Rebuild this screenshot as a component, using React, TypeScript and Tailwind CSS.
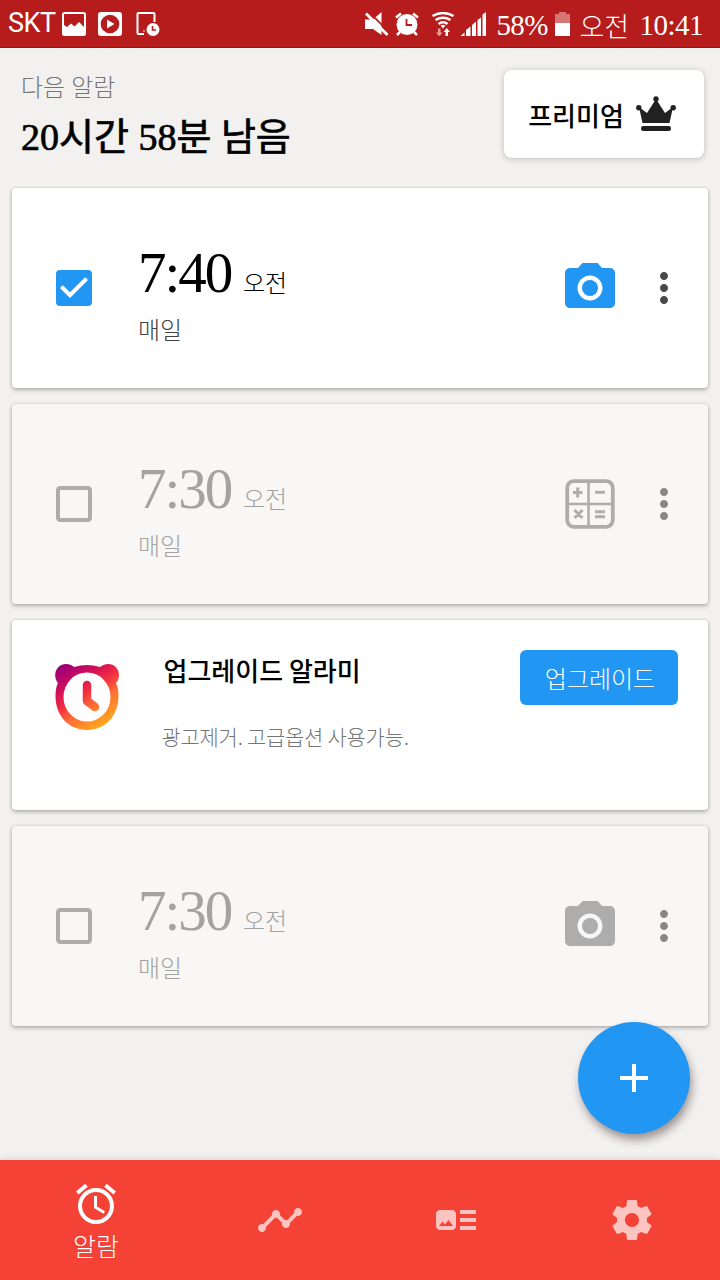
import { MdAdd, MdAlarm, MdArtTrack, MdCameraAlt, MdCheckBox, MdCheckBoxOutlineBlank, MdMoreVert, MdTimeline } from 'react-icons/md'

type AlarmProps = {
    time: string,
    active?: boolean,
    mission: 'camera' | 'math'
}

function StatusBar() {
    return (
        <header className="flex h-12 items-center justify-between border-b border-[#a50a10] bg-[#b71c1c] pl-2 pr-[17px] text-white">
            <div className="flex items-center">
                <span className="w-[54px] font-[Roboto,sans-serif] text-[27px] leading-none tracking-[-0.5px]">SKT</span>
                <svg className="h-6 w-6" viewBox="0 0 24 24">
                    <rect x="1" y="1" width="22" height="22" rx="1.500" fill="none" stroke="currentColor" strokeWidth="2" />
                    <path d="M2 13l3 2 4-3.500 3.500 3 4.500-4.500 5 5v7H2z" fill="currentColor" />
                </svg>
                <svg className="ml-3 h-6 w-6" viewBox="0 0 24 24">
                    <rect width="24" height="24" rx="3" fill="currentColor" />
                    <circle cx="12" cy="12" r="9.300" fill="#b71c1c" />
                    <path d="M9 7.500v9l7.500-4.500z" fill="currentColor" />
                </svg>
                <svg className="ml-3.5 h-6 w-6" viewBox="0 0 24 24">
                    <path d="M8 22H2.500a1 1 0 0 1-1-1V2a1 1 0 0 1 1-1h15a1 1 0 0 1 1 1v8" fill="none" stroke="currentColor" strokeWidth="2" />
                    <circle cx="8" cy="19" r="0.800" fill="currentColor" />
                    <circle cx="17" cy="17.500" r="6.500" fill="currentColor" />
                    <path d="M16.500 14v4h3.500" fill="none" stroke="#b71c1c" strokeWidth="1.600" />
                </svg>
            </div>
            <div className="flex items-center">
                <svg className="h-6 w-6" viewBox="0 0 24 24">
                    <path d="M0 7.500h8L16.500 0v23L8 17H0z" fill="currentColor" />
                    <path d="M3-1l22 22" stroke="#b71c1c" strokeWidth="1.800" />
                    <path d="M1 1.500l21.500 21.500" stroke="currentColor" strokeWidth="2.800" />
                </svg>
                <svg className="ml-1.5 h-6 w-6" viewBox="0 0 24 24">
                    <circle cx="12" cy="12.500" r="10.500" fill="currentColor" />
                    <path d="M1 5.500l5-4M23 5.500l-5-4M5 20l-3 3M19 20l3 3" stroke="currentColor" strokeWidth="2.500" />
                    <path d="M11.500 7v6H17" fill="none" stroke="#b71c1c" strokeWidth="1.800" />
                </svg>
                <svg className="ml-3 h-6 w-6" viewBox="0 0 24 24">
                    <path d="M1.500 4q10.500-6 21 0M4.500 8q7.500-4.500 15 0M7.500 12q4.500-3.500 9 0" fill="none" stroke="currentColor" strokeWidth="2.400" />
                    <path d="M9.500 13.500q2.500-1.500 5 0L12 16.500z" fill="currentColor" />
                    <path d="M7 16.500h2.500v4h2L8.200 24.500 5 20.500h2z" fill="#e59b9b" />
                    <path d="M14.500 24H17v-4h2l-3.200-4-3.300 4h2z" fill="currentColor" />
                </svg>
                <svg className="ml-1 h-[26px] w-7" viewBox="0 0 28 26">
                    <path d="M1.500 25l4-3.500V25zM7 25v-6l4.500-3.500V25zM13 25V14l4-3.500V25zM18.500 25V9L22 6.500V25zM23.500 25V3.500L27 1v24z" fill="currentColor" />
                </svg>
                <span className="ml-[9px] mt-1 w-[53px] font-['Liberation_Serif',serif] text-[29px] leading-none tracking-[-0.6px]">58%</span>
                <svg className="ml-[5px] h-[26px] w-[17px]" viewBox="0 0 17 26">
                    <path d="M1 3h4V1h7v2h4v10H1z" fill="#d77575" />
                    <path d="M1 12h15v13H1z" fill="currentColor" />
                </svg>
                <span className="ml-2 mt-1 w-[60px] font-['Noto_Sans_CJK_KR',sans-serif] text-[27px] font-light leading-none">오전</span>
                <span className="mt-1 font-['Liberation_Serif',serif] text-[29px] leading-none tracking-[-0.5px]">10:41</span>
            </div>
        </header>
    )
}

function Crown() {
    return (
        <svg className="h-9 w-10" viewBox="0 0 40 36" fill="#212121">
            <path d="M3 11l8 6 9-14 9 14 8-6-3.500 16h-27z" />
            <circle cx="20" cy="3" r="2.700" />
            <circle cx="2.800" cy="11.800" r="2.700" />
            <circle cx="37.200" cy="11.800" r="2.700" />
            <rect x="5" y="30" width="30" height="5" rx="2.200" />
        </svg>
    )
}

function MathIcon() {
    return (
        <svg className="h-[50px] w-[50px]" viewBox="0 0 50 50" fill="none" stroke="#adadad">
            <rect x="2.200" y="2.200" width="45.600" height="45.600" rx="6.500" strokeWidth="3.800" />
            <path d="M23.500 3v44M3 25h44" strokeWidth="2.600" />
            <path d="M8 13.500h9.500M12.700 8.500v10M30 13.300h10M30 32.700h10M30 37.700h10M9.500 31l8 8M17.500 31l-8 8" strokeWidth="3" />
        </svg>
    )
}

function AlarmCard({time, active, mission}: AlarmProps) {
    return (
        <section className={`flex h-[200px] items-center rounded pl-[38px] pr-5 shadow-[0_2px_4px_rgba(0,0,0,0.25),0_0_3px_rgba(0,0,0,0.15)] ${active ? 'bg-white' : 'bg-[#f8f7f5]'}`}>
            {active ? <MdCheckBox className="size-12 text-[#2196f3]" /> : <MdCheckBoxOutlineBlank className="size-12 text-[#adadad]" />}
            <div className={`ml-10 flex-1 pt-3 ${active ? 'text-black' : 'text-[#a3a3a2]'}`}>
                <div className="flex items-baseline">
                    <span className="w-[105px] font-['Liberation_Serif',serif] text-[57px] leading-[60px] tracking-[-2px]">{time}</span>
                    <span className="font-['Noto_Sans_CJK_KR',sans-serif] text-[24px] font-light leading-8">오전</span>
                </div>
                <p className={`mt-2.5 font-['Noto_Sans_CJK_KR',sans-serif] text-[24px] font-light leading-8 ${active ? 'text-[#424242]' : ''}`}>매일</p>
            </div>
            <div className="mr-5 flex h-[60px] w-[60px] items-center justify-center">
                {mission === 'camera' ? <MdCameraAlt className={`size-[60px] ${active ? 'text-[#2196f3]' : 'text-[#adadad]'}`} /> : <MathIcon />}
            </div>
            <MdMoreVert className={`size-12 ${active ? 'text-[#484848]' : 'text-[#888887]'}`} />
        </section>
    )
}

function Logo() {
    return (
        <svg className="h-[68px] w-16" viewBox="0 0 64 68">
            <defs>
                <linearGradient id="bear" gradientUnits="userSpaceOnUse" x1="8" y1="4" x2="48" y2="64">
                    <stop offset="0" stopColor="#9c0078" />
                    <stop offset="0.270" stopColor="#d50f58" />
                    <stop offset="0.480" stopColor="#f23240" />
                    <stop offset="0.680" stopColor="#ff6f35" />
                    <stop offset="1" stopColor="#ffab1c" />
                </linearGradient>
            </defs>
            <path d="M11 1c3 0 6 1 8 3q13-4 26 0c9-7 19-1 19 8 0 3-1 6-3 8 2 4 2.500 8 2.500 13C63.500 53 50 67 32 67S.5 53 .5 33C.5 28 1 24 3 20-3 13 1 1 11 1z" fill="url(#bear)" />
            <ellipse cx="32" cy="34" rx="23.500" ry="24.500" fill="#fff" />
            <path d="M32 22v16l8 6" fill="none" stroke="url(#bear)" strokeWidth="8.500" strokeLinecap="round" strokeLinejoin="round" />
        </svg>
    )
}

function UpgradeCard() {
    return (
        <section className="flex h-[190px] items-start rounded bg-white pl-[42.5px] pr-[30px] pt-[30px] font-['Noto_Sans_CJK_KR',sans-serif] shadow-[0_2px_4px_rgba(0,0,0,0.25),0_0_3px_rgba(0,0,0,0.15)]">
            <div className="mt-[13px]"><Logo /></div>
            <div className="ml-[43px] flex-1">
                <h2 className="pl-0.5 text-[26px] font-medium leading-10 text-black">업그레이드 알라미</h2>
                <p className="mt-[30px] text-[21px] font-light leading-8 tracking-[-0.28px] text-[#757575]">광고제거. 고급옵션 사용가능.</p>
            </div>
            <button className="h-[55px] w-[158px] rounded-md bg-[#2196f3] pl-0.5 text-[24px] font-light text-white">업그레이드</button>
        </section>
    )
}

function BottomNav() {
    return (
        <nav className="grid h-[120px] grid-cols-4 bg-[#f44336] text-[#fbc4c0] shadow-[0_-1px_6px_rgba(0,0,0,0.12)]">
            <a className="ml-3 flex flex-col items-center pt-5 text-white">
                <MdAlarm className="size-12" />
                <span className="font-['Noto_Sans_CJK_KR',sans-serif] text-[25px] font-light leading-[34px]">알람</span>
            </a>
            <a className="flex items-center justify-center pl-5"><MdTimeline className="size-12" /></a>
            <a className="flex items-center justify-center pl-3"><MdArtTrack className="size-12" /></a>
            <a className="flex items-center justify-center pl-1">
                <svg className="size-12" viewBox="0 0 24 24" fill="currentColor">
                    <path d="M19.430 12.980c.04-.32.07-.64.07-.98s-.03-.66-.07-.98l2.110-1.650c.19-.15.24-.42.12-.64l-2-3.460c-.12-.22-.39-.3-.61-.22l-2.490 1c-.52-.4-1.080-.73-1.690-.98l-.38-2.650C14.460 2.180 14.250 2 14 2h-4c-.25 0-.46.18-.49.42l-.38 2.650c-.61.25-1.170.59-1.690.98l-2.490-1c-.23-.09-.49 0-.61.22l-2 3.460c-.13.22-.07.49.12.64l2.110 1.650c-.04.32-.07.65-.07.98s.03.66.07.98l-2.110 1.650c-.19.15-.24.42-.12.64l2 3.460c.12.22.39.3.61.22l2.490-1c.52.4 1.080.73 1.690.98l.38 2.650c.03.24.24.42.49.42h4c.25 0 .46-.18.49-.42l.38-2.650c.61-.25 1.170-.59 1.690-.98l2.490 1c.23.09.49 0 .61-.22l2-3.460c.12-.22.07-.49-.12-.64l-2.110-1.650zM12 15.500c-1.930 0-3.500-1.570-3.500-3.500s1.570-3.500 3.500-3.500 3.500 1.570 3.500 3.500-1.570 3.500-3.500 3.500z" />
                </svg>
            </a>
        </nav>
    )
}

export default function App() {
    return (
        <div className="relative flex h-[1280px] w-[720px] flex-col overflow-hidden bg-[#f2f1ef]">
            <StatusBar />
            <div className="flex h-[140px] items-start justify-between pl-[21px] pr-4 pt-[22px]">
                <div className="font-['Liberation_Serif','Noto_Sans_CJK_KR',serif]">
                    <p className="text-[24px] font-light leading-9 text-[#757575]">다음 알람</p>
                    <h1 className="mt-[5px] text-[38px] leading-[52px] text-black [-webkit-text-stroke:0.7px_black]">20시간 58분 남음</h1>
                </div>
                <button className="flex h-[88px] w-[200px] items-center justify-center gap-3 rounded-lg bg-white pr-1 font-['Noto_Sans_CJK_KR',sans-serif] text-[26px] font-medium text-black shadow-[0_1px_6px_rgba(0,0,0,0.22)]">
                    프리미엄
                    <Crown />
                </button>
            </div>
            <main className="flex flex-1 flex-col gap-4 px-3">
                <AlarmCard time="7:40" active mission="camera" />
                <AlarmCard time="7:30" mission="math" />
                <UpgradeCard />
                <AlarmCard time="7:30" mission="camera" />
            </main>
            <button className="absolute bottom-[146px] right-[30px] flex size-28 items-center justify-center rounded-full bg-[#2196f3] text-white shadow-[2px_6px_8px_rgba(60,40,40,0.45)]">
                <MdAdd className="size-12" />
            </button>
            <BottomNav />
        </div>
    )
}
